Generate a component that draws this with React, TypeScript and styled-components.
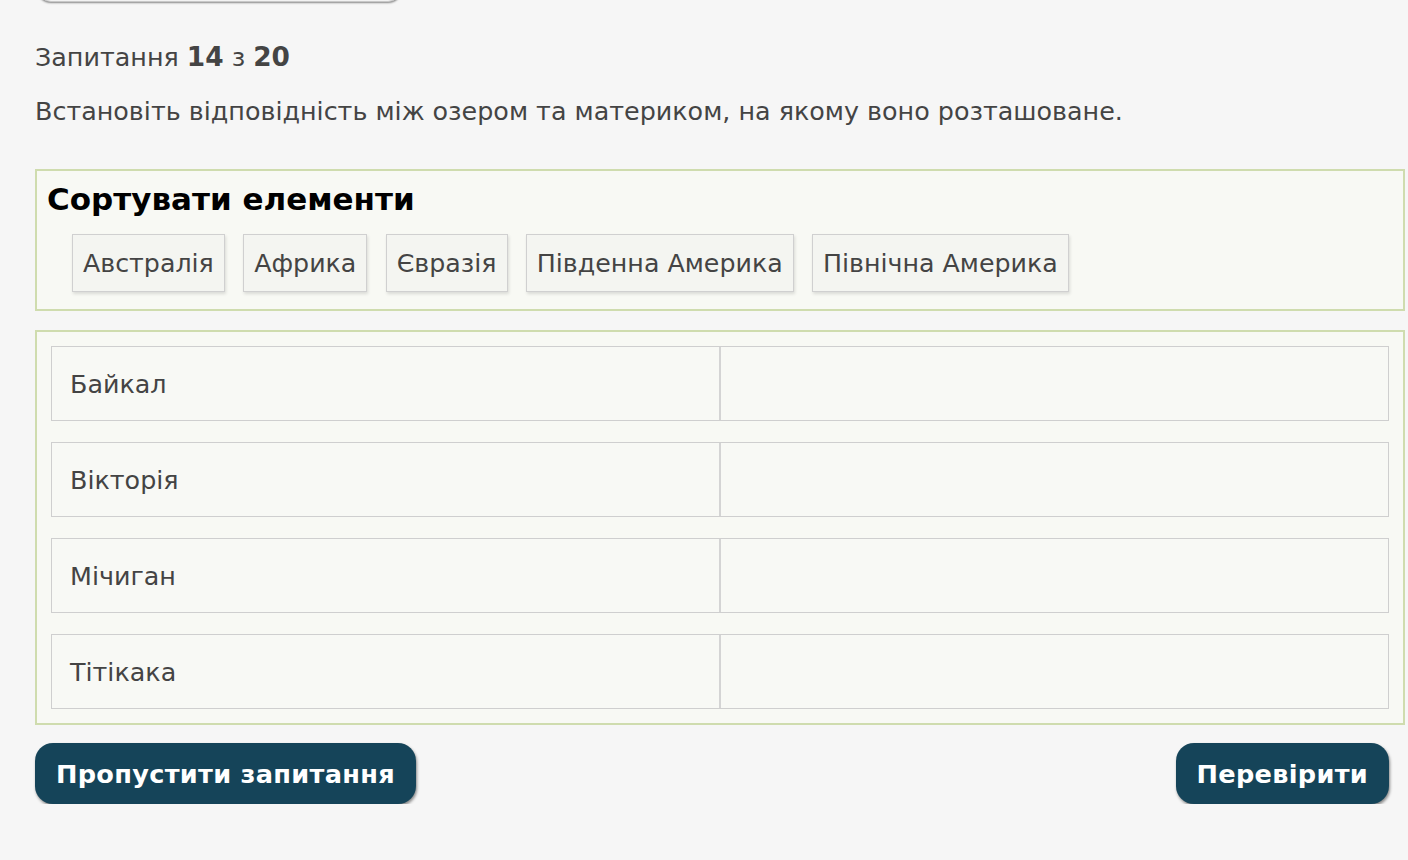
import React from "react";
import styled, { createGlobalStyle } from "styled-components";

const GlobalStyle = createGlobalStyle`
  html, body {
    margin: 0;
    padding: 0;
    background: #f6f6f6;
    overflow: hidden;
  }
  body {
    font-family: "DejaVu Sans", Verdana, sans-serif;
    color: #444;
  }
`;

const Page = styled.div`
  width: 1370px;
  padding-left: 35px;
  box-sizing: content-box;
`;

const TopButton = styled.div`
  margin-top: -40px;
  margin-left: 2px;
  width: 365px;
  height: 42px;
  border-radius: 14px;
  background: #f2f2f2;
  border: 1px solid #c8c8c8;
  box-shadow: 0 1px 2px rgba(0, 0, 0, 0.45);
  box-sizing: border-box;
`;

const Counter = styled.p`
  margin: 37px 0 0;
  font-size: 25.4px;
  line-height: 36px;
  color: #444;
  b {
    font-weight: bold;
    font-size: 26.4px;
  }
`;

const Instruction = styled.p`
  margin: 18px 0 0;
  font-size: 25.4px;
  line-height: 36px;
  color: #444;
`;

const Panel = styled.div<{ $mt: number }>`
  margin-top: ${(p) => p.$mt}px;
  border: 2px solid #cfdcae;
  background: #f8f9f4;
  box-sizing: border-box;
`;

const SortPanel = styled(Panel)`
  height: 142px;
  padding: 9px 10px 0;
`;

const SortTitle = styled.h2`
  margin: 0;
  font-size: 31px;
  line-height: 38px;
  font-weight: bold;
  color: #000;
`;

const Chips = styled.div`
  display: flex;
  gap: 18.3px;
  margin: 16px 0 0 25px;
`;

const Chip = styled.div`
  height: 58px;
  padding: 0 10px;
  display: flex;
  align-items: center;
  font-size: 25.3px;
  color: #444;
  background: #f4f5f1;
  border: 1px solid #d0d0d0;
  box-shadow: 1px 2px 3px rgba(0, 0, 0, 0.12);
  box-sizing: border-box;
`;

const MatchPanel = styled(Panel)`
  padding: 14px;
  display: flex;
  flex-direction: column;
  gap: 21px;
`;

const Row = styled.div`
  display: grid;
  grid-template-columns: 669px 1fr;
  height: 75px;
  border: 1px solid #cfcfcf;
  box-sizing: border-box;
  background: #f8f9f5;
`;

const Cell = styled.div<{ $left?: boolean }>`
  display: flex;
  align-items: center;
  padding-left: 18px;
  font-size: 25.4px;
  color: #444;
  border-right: ${(p) => (p.$left ? "2px solid #d4d4d4" : "none")};
`;

const Actions = styled.div`
  display: flex;
  justify-content: space-between;
  margin-top: 18px;
  padding-right: 16px;
`;

const ActionButton = styled.button`
  height: 61px;
  padding: 0 21px;
  border: none;
  border-radius: 18px;
  background: #154459;
  color: #fff;
  font-family: "DejaVu Sans", Verdana, sans-serif;
  font-size: 25.6px;
  font-weight: bold;
  letter-spacing: 0.3px;
  box-shadow: 1px 2px 3px rgba(0, 0, 0, 0.45);
  cursor: pointer;
`;

const chips = ["Австралія", "Африка", "Євразія", "Південна Америка", "Північна Америка"];
const lakes = ["Байкал", "Вікторія", "Мічиган", "Тітікака"];

export default function App() {
  return (
    <>
      <GlobalStyle />
      <Page>
        <TopButton />
        <Counter>
          Запитання <b>14</b> з <b>20</b>
        </Counter>
        <Instruction>
          Встановіть відповідність між озером та материком, на якому воно розташоване.
        </Instruction>
        <SortPanel $mt={40}>
          <SortTitle>Сортувати елементи</SortTitle>
          <Chips>
            {chips.map((c) => (
              <Chip key={c}>{c}</Chip>
            ))}
          </Chips>
        </SortPanel>
        <MatchPanel $mt={19}>
          {lakes.map((l) => (
            <Row key={l}>
              <Cell $left>{l}</Cell>
              <Cell />
            </Row>
          ))}
        </MatchPanel>
        <Actions>
          <ActionButton>Пропустити запитання</ActionButton>
          <ActionButton>Перевірити</ActionButton>
        </Actions>
      </Page>
    </>
  );
}
